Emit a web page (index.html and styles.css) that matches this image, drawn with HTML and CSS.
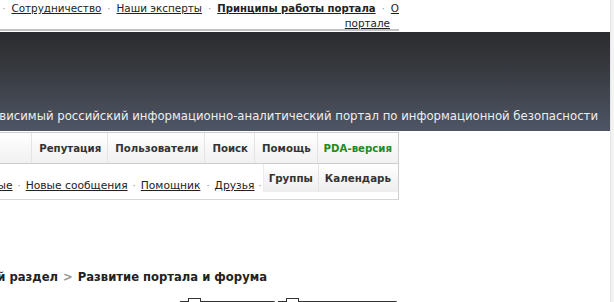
FILE: index.html
```html
<!DOCTYPE html>
<html lang="ru">
<head>
<meta charset="utf-8">
<title>Портал</title>
<link rel="stylesheet" href="styles.css">
</head>
<body>
<div class="screen">
  <div class="page">
    <div class="toplinks">
      <div class="toplinks-line">
        <span class="sep">·</span>
        <a href="#" class="tl">Сотрудничество</a>
        <span class="sep">·</span>
        <a href="#" class="tl">Наши эксперты</a>
        <span class="sep">·</span>
        <a href="#" class="tl strong">Принципы работы портала</a>
        <span class="sep">·</span>
        <a href="#" class="tl">О</a>
      </div>
      <div class="toplinks-line second">
        <a href="#" class="tl">портале</a>
      </div>
    </div>
    <div class="topline"></div>

    <header class="banner">
      <div class="slogan">Независимый российский информационно-аналитический портал по информационной безопасности</div>
    </header>

    <nav class="navbar">
      <a href="#" class="navitem">Репутация</a>
      <a href="#" class="navitem">Пользователи</a>
      <a href="#" class="navitem">Поиск</a>
      <a href="#" class="navitem">Помощь</a>
      <a href="#" class="navitem pda">PDA-версия</a>
    </nav>

    <div class="subbar">
      <div class="sublinks">
        <a href="#" class="sl">Непрочитанные</a><span class="sep">·</span>
        <a href="#" class="sl">Новые сообщения</a><span class="sep">·</span>
        <a href="#" class="sl">Помощник</a><span class="sep wide">·</span>
        <a href="#" class="sl">Друзья</a><span class="sep last">·</span>
      </div>
      <div class="subtabs">
        <a href="#" class="subtab first">Группы</a>
        <a href="#" class="subtab">Календарь</a>
      </div>
    </div>

    <div class="crumbs">
      <span class="crumb">Главный раздел</span>
      <span class="crumb-sep">&gt;</span>
      <span class="crumb">Развитие портала и форума</span>
    </div>

    <div class="buttons">
      <div class="btn btn-a"><span class="knob"></span></div>
      <div class="btn btn-b"><span class="knob"></span></div>
    </div>
  </div>
  <div class="edge"></div>
</div>
</body>
</html>
```
FILE: styles.css
```css
html, body {
  margin: 0;
  padding: 0;
  background: #ffffff;
}
body {
  width: 614px;
  height: 302px;
  overflow: hidden;
  font-family: "DejaVu Sans", Verdana, sans-serif;
  color: #222;
}
a { color: #222; }

.screen {
  display: flex;
  width: 614px;
  height: 302px;
}
.page {
  width: 610px;
  flex: none;
  display: flex;
  flex-direction: column;
  overflow: hidden;
}
.page > * { flex: none; }
.edge {
  width: 4px;
  flex: none;
  background: #f3f3f3;
  border-left: 1px solid #e6e6e6;
  box-sizing: border-box;
}

/* top links */
.toplinks {
  width: 399px;
  height: 29px;
  font-size: 10.4px;
  line-height: 13px;
  padding-top: 2px;
  box-sizing: border-box;
}
.toplinks-line {
  display: flex;
  justify-content: flex-end;
  align-items: baseline;
  white-space: nowrap;
}
.toplinks-line.second {
  padding-right: 9px;
  margin-top: 2px;
}
.tl { text-decoration: underline; color: #222; }
.tl.strong { font-weight: bold; font-size: 10.1px; }
.sep {
  color: #9a9a9a;
  padding: 0 6px;
  font-size: 10px;
}
.topline {
  width: 399px;
  height: 2px;
  background: #c2c2c2;
  margin-bottom: 1px;
}

/* banner */
.banner {
  height: 99px;
  background: linear-gradient(#2a2b2d, #3a3d44 45%, #4e5565);
  display: flex;
  justify-content: flex-end;
  align-items: flex-end;
  padding: 0 12px 7px 0;
  box-sizing: border-box;
}
.slogan {
  white-space: nowrap;
  color: #eeeeee;
  font-size: 11.7px;
  line-height: 16px;
}

/* nav */
.navbar {
  width: 399px;
  height: 32px;
  margin-top: 1px;
  box-sizing: border-box;
  border: 1px solid #cdcdcd;
  border-left: none;
  display: flex;
  justify-content: flex-end;
  background: linear-gradient(#ffffff, #f1f1f1);
}
.navitem {
  display: flex;
  align-items: center;
  padding: 0 6px 0 7px;
  border-left: 1px solid #e4e4e4;
  font-size: 10.2px;
  font-weight: bold;
  color: #333;
  text-decoration: none;
  white-space: nowrap;
}
.navitem.pda { color: #1f8a1f; padding-left: 6px; }

.subbar {
  width: 399px;
  height: 36px;
  box-sizing: border-box;
  border-right: 1px solid #cdcdcd;
  border-bottom: 1px solid #d6d6d6;
  display: flex;
  justify-content: flex-end;
}
.sublinks {
  display: flex;
  align-items: center;
  padding-top: 8px;
  white-space: nowrap;
  font-size: 10.7px;
}
.sublinks .sep { padding: 0 5px; }
.sublinks .sep.wide { padding: 0 5px 0 6px; }
.sublinks .sep.last { padding: 0 1px 0 4px; }
.sl { text-decoration: underline; color: #222; }
.subtabs {
  display: flex;
  height: 28px;
  box-sizing: border-box;
  background: linear-gradient(#ffffff, #eeeeee);
  border-left: 1px solid #ececec;
}
.subtab {
  display: flex;
  align-items: center;
  padding: 0 7px 0 6px;
  font-size: 10.3px;
  font-weight: bold;
  color: #333;
  text-decoration: none;
  white-space: nowrap;
}
.subtab.first { padding: 0 5px 0 5px; }
.subtab + .subtab { border-left: 1px solid #e4e4e4; }

/* breadcrumbs */
.crumbs {
  width: 267px;
  margin-top: 70px;
  display: flex;
  justify-content: flex-end;
  white-space: nowrap;
  font-size: 11.6px;
  font-weight: bold;
  color: #222;
  line-height: 15px;
}
.crumb-sep {
  color: #999;
  padding: 0 5px;
}

/* button tops */
.buttons {
  display: flex;
  margin-top: 16px;
  padding-left: 180px;
  gap: 3px;
}
.btn {
  height: 10px;
  border-top: 1px solid #333;
  border-left: 1px solid #333;
  border-right: 1px solid #bbb;
  position: relative;
  box-sizing: border-box;
}
.btn-a { width: 95px; }
.btn-b { width: 119px; }
.knob {
  position: absolute;
  top: -4px;
  left: 7px;
  width: 13px;
  height: 4px;
  border: 1px solid #333;
  border-bottom: none;
  background: #fff;
  box-sizing: border-box;
}
```
